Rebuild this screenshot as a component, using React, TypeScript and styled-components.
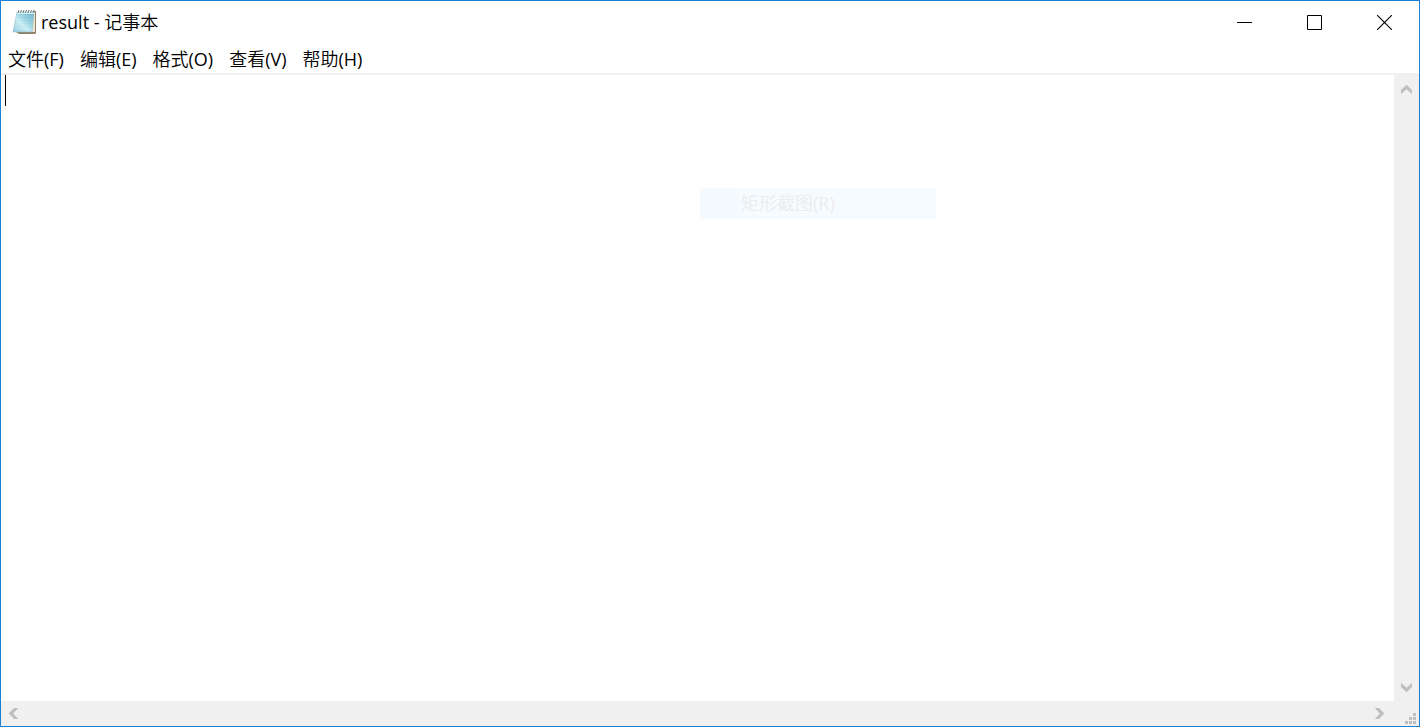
import React from "react";
import styled, { createGlobalStyle } from "styled-components";

const GlobalStyle = createGlobalStyle`
  *, *::before, *::after { box-sizing: border-box; }
  body {
    margin: 0;
    background: #ffffff;
    color: #000000;
    font-family: "Open Sans", "Noto Sans CJK SC DemiLight", "Noto Sans CJK SC", sans-serif;
    font-size: 18px;
    font-weight: 400;
    line-height: 24px;
  }
  button {
    margin: 0;
    padding: 0;
    border: 0;
    background: transparent;
    color: inherit;
    font: inherit;
  }
`;

const Window = styled.div`
  position: relative;
  display: flex;
  flex-direction: column;
  min-height: 100vh;
  border: 1px solid #1a80d4;
`;

const TitleBar = styled.header`
  display: flex;
  align-items: center;
  height: 42px;
  padding-left: 11px;
`;

const Title = styled.h1`
  flex: 1;
  margin: 0;
  padding-left: 3px;
  font-size: 18px;
  font-weight: inherit;
`;

const WindowControls = styled.div`
  display: flex;
  gap: 1px;
  height: 43px;
`;

const WindowButton = styled.button`
  display: flex;
  align-items: center;
  justify-content: center;
  width: 69px;
  &:hover { background: #e5e5e5; }
`;

const MenuBar = styled.nav`
  display: flex;
  align-items: center;
  gap: 2px;
  height: 32px;
  padding-top: 2px;
  border-bottom: 2px solid #f0f0f0;
`;

const MenuButton = styled.button`
  padding: 0 7px;
  white-space: nowrap;
  &:hover { background: #e5f3ff; }
`;

const Workspace = styled.main`
  flex: 1;
  display: grid;
  grid-template-columns: 1fr 25px;
  grid-template-rows: 1fr 25px;
  background: #f0f0f0;
`;

const EditorArea = styled.div`
  position: relative;
  display: flex;
  background: #ffffff;
`;

const Editor = styled.textarea`
  flex: 1;
  min-width: 0;
  padding: 0 4px;
  border: 0;
  outline: 0;
  resize: none;
  overflow: hidden;
  background: transparent;
  font: inherit;
  line-height: 32px;
`;

const Caret = styled.span`
  position: absolute;
  top: 0;
  left: 4px;
  width: 1px;
  height: 31px;
  background: #000000;
`;

const FadingMenuItem = styled.div`
  position: absolute;
  top: 187px;
  left: 699px;
  display: flex;
  width: 236px;
  height: 31px;
  background: #f6fbff;
  color: #ececec;
  line-height: 30px;
  pointer-events: none;
`;

const MenuGutter = styled.span`
  width: 37px;
  margin-right: 4px;
  background: #f5faff;
`;

const ScrollTrack = styled.div<{ $vertical?: boolean }>`
  display: flex;
  flex-direction: ${(p) => (p.$vertical ? "column" : "row")};
  justify-content: space-between;
  padding: ${(p) => (p.$vertical ? "1px 0 0" : "0 2px 0 0")};
`;

const ScrollButton = styled.button<{ $tall?: boolean }>`
  display: flex;
  align-items: center;
  justify-content: center;
  width: 25px;
  height: ${(p) => (p.$tall ? "27px" : "25px")};
`;

const GripCell = styled.div`
  display: flex;
  align-items: flex-end;
  justify-content: flex-end;
  padding: 0 3px 2px 0;
`;

const turns = { up: 0, right: 90, down: 180, left: 270 };

function Chevron({ direction }: { direction: keyof typeof turns }) {
  return (
    <svg width="13" height="13" viewBox="0 0 13 13" aria-hidden="true">
      <path
        d="M1 7 6.5 1.7 12 7V11.3L6.5 6.2 1 11.3Z"
        fill="#bfbfbf"
        transform={`rotate(${turns[direction]} 6.5 6.5)`}
      />
    </svg>
  );
}

function NotepadIcon() {
  return (
    <svg width="26" height="28" viewBox="0 0 26 28" aria-hidden="true">
      <defs>
        <linearGradient id="paper" x1="0" y1="1" x2="1" y2="0">
          <stop offset="0" stopColor="#8fc9d9" />
          <stop offset="0.4" stopColor="#c9edf4" />
          <stop offset="0.6" stopColor="#98d3e1" />
          <stop offset="1" stopColor="#5eacc2" />
        </linearGradient>
      </defs>
      <path d="M21 3h3v22l-1 1H7l-3-2Z" fill="#8d8067" />
      <path d="M22 4h1v20H7l-2-1Z" fill="#eee6d1" />
      <path d="M5 4h17l-2 20H1Z" fill="url(#paper)" stroke="#84b5c1" strokeWidth="0.5" />
      <path d="M5 4h17v2H5Z" fill="#d6eef2" />
      <path d="M4.3 8h17M4 11h17M3.5 14h17M3 17h17M2.5 20h17" stroke="#ffffff" strokeOpacity="0.2" />
      <path
        d="M6 5l1-3M8.5 5l1-3M11 5l1-3M13.5 5l1-3M16 5l1-3M18.5 5l1-3M21 5l1-3"
        stroke="#65777a"
        strokeWidth="1"
      />
    </svg>
  );
}

const menus = ["文件(F)", "编辑(E)", "格式(O)", "查看(V)", "帮助(H)"];

export default function App() {
  return (
    <Window>
      <GlobalStyle />
      <TitleBar>
        <NotepadIcon />
        <Title>result - 记事本</Title>
        <WindowControls>
          <WindowButton aria-label="最小化">
            <svg width="15" height="15" viewBox="0 0 15 15">
              <path d="M0 7.5h15" stroke="#000000" />
            </svg>
          </WindowButton>
          <WindowButton aria-label="最大化">
            <svg width="15" height="15" viewBox="0 0 15 15">
              <path d="M.5 .5h14v14H.5Z" fill="none" stroke="#000000" />
            </svg>
          </WindowButton>
          <WindowButton aria-label="关闭">
            <svg width="15" height="15" viewBox="0 0 15 15">
              <path d="M0 0l15 15M15 0L0 15" stroke="#000000" strokeWidth="1.1" />
            </svg>
          </WindowButton>
        </WindowControls>
      </TitleBar>
      <MenuBar aria-label="菜单栏">
        {menus.map((menu) => (
          <MenuButton key={menu}>{menu}</MenuButton>
        ))}
      </MenuBar>
      <Workspace>
        <EditorArea>
          <Editor aria-label="文本编辑器" spellCheck={false} />
          <Caret />
        </EditorArea>
        <ScrollTrack $vertical>
          <ScrollButton $tall aria-label="向上滚动"><Chevron direction="up" /></ScrollButton>
          <ScrollButton $tall aria-label="向下滚动"><Chevron direction="down" /></ScrollButton>
        </ScrollTrack>
        <ScrollTrack>
          <ScrollButton aria-label="向左滚动"><Chevron direction="left" /></ScrollButton>
          <ScrollButton aria-label="向右滚动"><Chevron direction="right" /></ScrollButton>
        </ScrollTrack>
        <GripCell>
          <svg width="11" height="11" viewBox="0 0 11 11" aria-hidden="true">
            <path
              d="M8 0h3v3H8ZM4 4h3v3H4ZM8 4h3v3H8ZM0 8h3v3H0ZM4 8h3v3H4ZM8 8h3v3H8Z"
              fill="#bfbfbf"
            />
          </svg>
        </GripCell>
      </Workspace>
      <FadingMenuItem>
        <MenuGutter />
        矩形截图(R)
      </FadingMenuItem>
    </Window>
  );
}
